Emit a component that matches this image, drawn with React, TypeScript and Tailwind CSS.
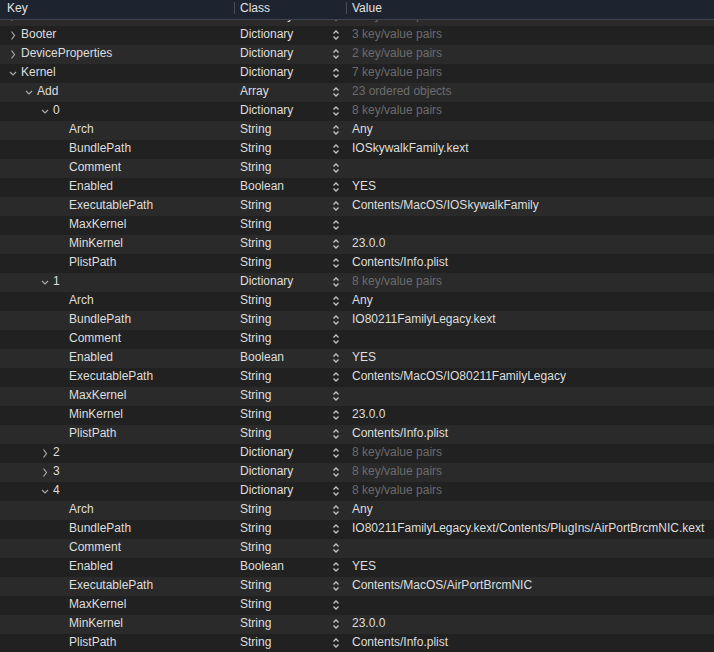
import React from "react";

type Row = {
  level: number;
  name: string;
  type: string;
  value?: string;
  dim?: boolean;
  open?: boolean;
};

const kext = (bundle: string, exec: string): Row[] => [
  { level: 3, name: "Arch", type: "String", value: "Any" },
  { level: 3, name: "BundlePath", type: "String", value: bundle },
  { level: 3, name: "Comment", type: "String", value: "" },
  { level: 3, name: "Enabled", type: "Boolean", value: "YES" },
  { level: 3, name: "ExecutablePath", type: "String", value: exec },
  { level: 3, name: "MaxKernel", type: "String", value: "" },
  { level: 3, name: "MinKernel", type: "String", value: "23.0.0" },
  { level: 3, name: "PlistPath", type: "String", value: "Contents/Info.plist" },
];

const ROWS: Row[] = [
  { level: 0, name: "ACPI", type: "Dictionary", value: "4 key/value pairs", dim: true, open: false },
  { level: 0, name: "Booter", type: "Dictionary", value: "3 key/value pairs", dim: true, open: false },
  { level: 0, name: "DeviceProperties", type: "Dictionary", value: "2 key/value pairs", dim: true, open: false },
  { level: 0, name: "Kernel", type: "Dictionary", value: "7 key/value pairs", dim: true, open: true },
  { level: 1, name: "Add", type: "Array", value: "23 ordered objects", dim: true, open: true },
  { level: 2, name: "0", type: "Dictionary", value: "8 key/value pairs", dim: true, open: true },
  ...kext("IOSkywalkFamily.kext", "Contents/MacOS/IOSkywalkFamily"),
  { level: 2, name: "1", type: "Dictionary", value: "8 key/value pairs", dim: true, open: true },
  ...kext("IO80211FamilyLegacy.kext", "Contents/MacOS/IO80211FamilyLegacy"),
  { level: 2, name: "2", type: "Dictionary", value: "8 key/value pairs", dim: true, open: false },
  { level: 2, name: "3", type: "Dictionary", value: "8 key/value pairs", dim: true, open: false },
  { level: 2, name: "4", type: "Dictionary", value: "8 key/value pairs", dim: true, open: true },
  ...kext(
    "IO80211FamilyLegacy.kext/Contents/PlugIns/AirPortBrcmNIC.kext",
    "Contents/MacOS/AirPortBrcmNIC"
  ),
];

const INDENT = ["pl-[9px]", "pl-[25px]", "pl-[41px]", "pl-[57px]"];

function Disclosure({ open }: { open?: boolean }) {
  if (open === undefined) return <span className="w-2 shrink-0" />;
  return (
    <svg width="8" height="19" viewBox="0 0 8 19" className="shrink-0 text-[#a9a9a9]">
      {open ? (
        <path d="M1 8 L4 11 L7 8" fill="none" stroke="currentColor" strokeWidth="1.2" />
      ) : (
        <path d="M2.5 5.5 L5.5 9.5 L2.5 13.5" fill="none" stroke="currentColor" strokeWidth="1.2" />
      )}
    </svg>
  );
}

function Stepper() {
  return (
    <svg width="8" height="12" viewBox="0 0 8 12" className="shrink-0 text-[#c4c4c4]">
      <path d="M1.5 4.5 L4 2 L6.5 4.5" fill="none" stroke="currentColor" strokeWidth="1.3" />
      <path d="M1.5 7.5 L4 10 L6.5 7.5" fill="none" stroke="currentColor" strokeWidth="1.3" />
    </svg>
  );
}

export default function App() {
  return (
    <div className="w-[714px] h-[652px] overflow-hidden bg-[#212121] text-[12px] text-[#dedede] font-['Liberation_Sans',Arial,sans-serif] flex flex-col">
      {/* header */}
      <div className="flex h-5 shrink-0 bg-[#1e2330] border-b border-[#3c4250] leading-[17px] text-[#e2e2e2]">
        <div className="w-[235px] shrink-0 pl-[7px] flex justify-between items-start">
          <span>Key</span>
          <span className="w-px h-3 mt-[2px] bg-[#474c58]" />
        </div>
        <div className="w-[112px] shrink-0 pl-[5px] flex justify-between items-start">
          <span>Class</span>
          <span className="w-px h-3 mt-[2px] bg-[#474c58]" />
        </div>
        <div className="flex-1 pl-[5px]">Value</div>
      </div>

      {/* rows, scrolled slightly */}
      <div className="flex-1 overflow-hidden">
        <div className="-mt-[13px]">
          {ROWS.map((r, i) => (
            <div
              key={i}
              className={`flex h-[19px] leading-[17px] whitespace-nowrap ${
                i % 2 === 0 ? "bg-[#2a2a2a]" : "bg-[#212121]"
              }`}
            >
              <div className={`w-[235px] shrink-0 flex gap-1 ${INDENT[r.level]}`}>
                <Disclosure open={r.open} />
                <span>{r.name}</span>
              </div>
              <div className="w-[112px] shrink-0 pl-[5px] pr-[7px] flex items-start justify-between">
                <span>{r.type}</span>
                <span className="mt-[3px] flex">
                  <Stepper />
                </span>
              </div>
              <div className={`flex-1 pl-[5px] ${r.dim ? "text-[#6c6c6c]" : ""}`}>{r.value}</div>
            </div>
          ))}
        </div>
      </div>
    </div>
  );
}
